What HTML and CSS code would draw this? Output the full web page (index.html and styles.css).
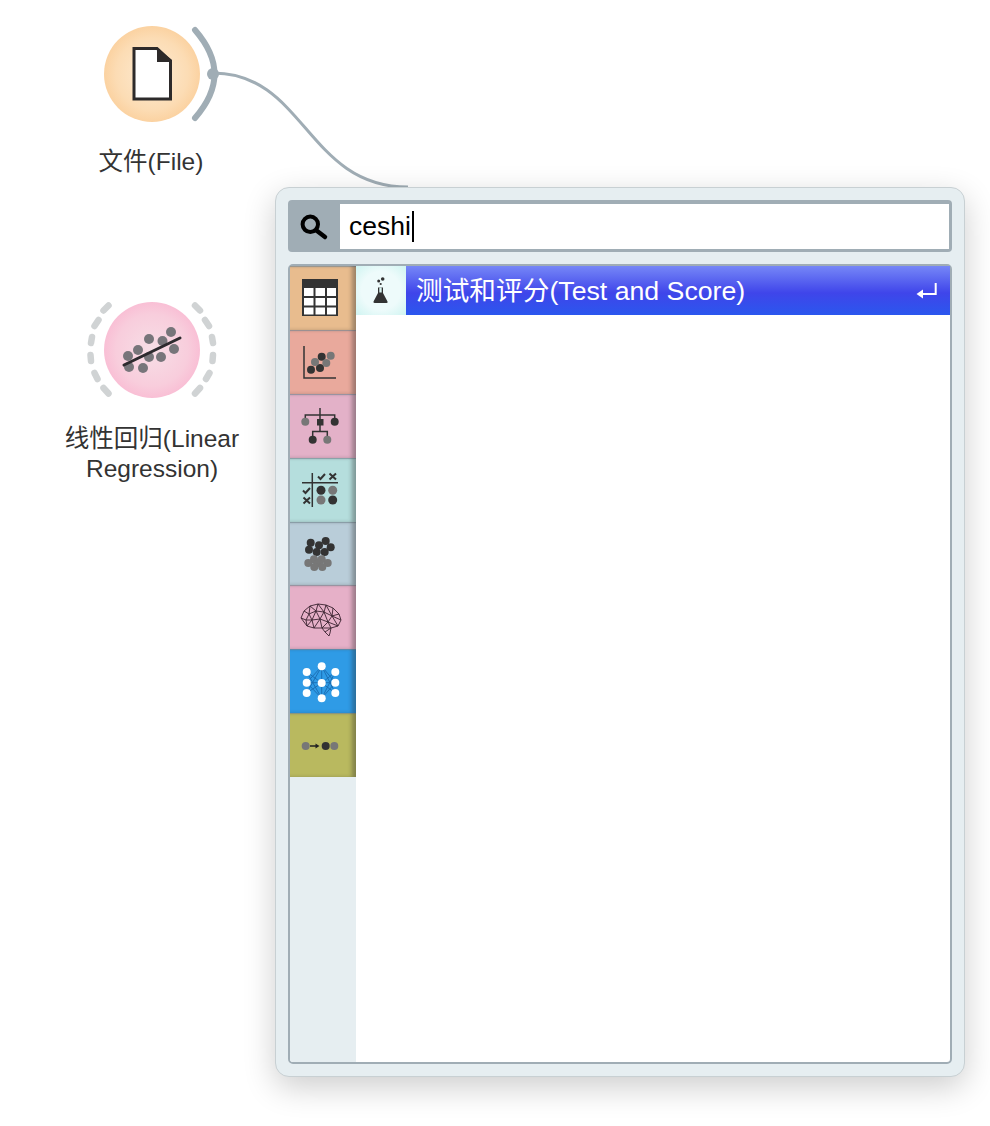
FILE: index.html
```html
<!DOCTYPE html>
<html lang="zh-CN">
<head>
    <meta charset="UTF-8">
    <meta name="viewport" content="width=device-width, initial-scale=1.0">
    <title>文件 - 画布</title>
    <link rel="stylesheet" href="styles.css">
</head>
<body>
    <div class="canvas">
        <!-- nodes and the link drawn on the free canvas -->
        <svg class="scheme" width="990" height="1126" viewBox="0 0 990 1126">
            <defs>
                <radialGradient id="fileGlow">
                    <stop offset="0" stop-color="#fdebd3"/>
                    <stop offset="0.75" stop-color="#fcdcb4"/>
                    <stop offset="1" stop-color="#fbd2a1"/>
                </radialGradient>
                <radialGradient id="regGlow">
                    <stop offset="0" stop-color="#f7dee6"/>
                    <stop offset="0.75" stop-color="#f8cddc"/>
                    <stop offset="1" stop-color="#f9bfd5"/>
                </radialGradient>
            </defs>

            <path class="link" d="M213 73 C305 73 307 187 408 187"/>

            <circle cx="152" cy="74" r="48" fill="url(#fileGlow)"/>
            <path class="doc" d="M134 48.500H157L170.500 61V99H134Z"/>
            <path class="doc-fold" d="M156 47.500 L172 60 L172 62 L157 62 L157 47.500Z"/>
            <path class="out-arc" d="M195 30 C221 60 221 88 195 118"/>
            <circle cx="213" cy="74" r="6" fill="#a0adb5"/>

            <circle cx="152" cy="350" r="48" fill="url(#regGlow)"/>
            <path class="dash-arc" d="M108.500 305.500L103.500 310.500M98.500 320L94.500 326M92 337L91 343M90.500 355L91 361M94.500 373L97.500 379M103.500 388L108.500 393.500"/>
            <path class="dash-arc" d="M195 305.500L200 310.500M205 320L209 326M212 337L213 343M213 355L212.500 361M209.500 373L206 379M200 388L195 393.500"/>
            <g fill="#77757a">
                <circle cx="128" cy="356" r="5"/>
                <circle cx="138" cy="350" r="5"/>
                <circle cx="149" cy="339" r="5"/>
                <circle cx="162.500" cy="341" r="5"/>
                <circle cx="171" cy="332" r="5"/>
                <circle cx="174" cy="349" r="5"/>
                <circle cx="161" cy="357" r="5"/>
                <circle cx="149" cy="357" r="5"/>
                <circle cx="129" cy="367" r="5"/>
                <circle cx="143" cy="368" r="5"/>
            </g>
            <path d="M124 365 L180 338" stroke="#2d2a2e" stroke-width="3" stroke-linecap="round"/>
        </svg>

        <div class="node-label file-label">文件(File)</div>
        <div class="node-label reg-label">线性回归(Linear<br>Regression)</div>

        <!-- quick menu -->
        <div class="menu">
            <div class="search">
                <div class="search-icon">
                    <svg width="52" height="52" viewBox="288 200 52 52">
                        <circle cx="310.300" cy="224.300" r="7.700" fill="none" stroke="#000" stroke-width="4"/>
                        <path d="M316.500 230.500 L325 237" stroke="#000" stroke-width="4.500" stroke-linecap="round"/>
                    </svg>
                </div>
                <div class="search-input">ceshi<span class="caret"></span></div>
            </div>

            <div class="list">
                <div class="tabs">
                    <div class="tab tab-data">
                        <svg width="66" height="64" viewBox="290 266 66 64">
                            <rect x="302" y="279" width="36" height="37" fill="#333"/>
                            <g fill="#fff">
                                <rect x="304" y="288" width="9.500" height="8"/>
                                <rect x="315.500" y="288" width="9.500" height="8"/>
                                <rect x="327" y="288" width="9" height="8"/>
                                <rect x="304" y="298" width="9.500" height="7.500"/>
                                <rect x="315.500" y="298" width="9.500" height="7.500"/>
                                <rect x="327" y="298" width="9" height="7.500"/>
                                <rect x="304" y="307.500" width="9.500" height="7"/>
                                <rect x="315.500" y="307.500" width="9.500" height="7"/>
                                <rect x="327" y="307.500" width="9" height="7"/>
                            </g>
                        </svg>
                    </div>
                    <div class="tab tab-vis">
                        <svg width="66" height="64" viewBox="290 330 66 64">
                            <path d="M304 346V378H336" fill="none" stroke="#333" stroke-width="1.500"/>
                            <g class="dark">
                                <circle cx="321.700" cy="356.700" r="4"/>
                                <circle cx="320" cy="368" r="4"/>
                                <circle cx="311" cy="369.700" r="4"/>
                            </g>
                            <g class="gray">
                                <circle cx="330.700" cy="355.700" r="4"/>
                                <circle cx="315" cy="362" r="4"/>
                                <circle cx="326.300" cy="363" r="4"/>
                            </g>
                        </svg>
                    </div>
                    <div class="tab tab-model">
                        <svg width="66" height="64" viewBox="290 394 66 64">
                            <path d="M320 408V431M305.300 421V415H334.700V421M312.700 438V431.500H327.300V438" fill="none" stroke="#333" stroke-width="1.500"/>
                            <rect x="317" y="419" width="6.500" height="6.500" fill="#333"/>
                            <circle class="gray" cx="305.300" cy="421.700" r="4"/>
                            <circle class="dark" cx="334.700" cy="421.700" r="4"/>
                            <circle class="dark" cx="312.700" cy="439.700" r="4"/>
                            <circle class="gray" cx="327.300" cy="439.700" r="4"/>
                        </svg>
                    </div>
                    <div class="tab tab-eval">
                        <svg width="66" height="64" viewBox="290 458 66 64">
                            <path d="M312.300 473V507M302 482.700H338" stroke="#333" stroke-width="1.500"/>
                            <g fill="none" stroke="#333" stroke-width="2">
                                <path d="M318 476.500L320.500 479L325 474"/>
                                <path d="M329.500 473.500L336 479.500M336 473.500L329.500 479.500"/>
                                <path d="M303 490.500L305.500 493L310 488"/>
                                <path d="M303.500 497.500L310 503.500M310 497.500L303.500 503.500"/>
                            </g>
                            <circle class="dark" cx="321" cy="490.300" r="4.500"/>
                            <circle class="gray" cx="332.700" cy="490.300" r="4.500"/>
                            <circle class="gray" cx="321" cy="500" r="4.500"/>
                            <circle class="dark" cx="332.700" cy="500" r="4.500"/>
                        </svg>
                    </div>
                    <div class="tab tab-cluster">
                        <svg width="66" height="64" viewBox="290 521 66 64">
                            <g class="dark">
                                <circle cx="325.700" cy="540" r="4"/>
                                <circle cx="319" cy="544.300" r="4"/>
                                <circle cx="310.700" cy="541.700" r="4"/>
                                <circle cx="309" cy="548.700" r="4"/>
                                <circle cx="330.700" cy="546.300" r="4"/>
                                <circle cx="316.700" cy="551" r="4"/>
                                <circle cx="324.700" cy="551" r="4"/>
                            </g>
                            <g class="gray">
                                <circle cx="314" cy="558.300" r="4"/>
                                <circle cx="321.700" cy="558.300" r="4"/>
                                <circle cx="308.300" cy="562" r="4"/>
                                <circle cx="327.700" cy="562" r="4"/>
                                <circle cx="317.700" cy="562.300" r="4"/>
                                <circle cx="314.300" cy="566" r="4"/>
                                <circle cx="322.300" cy="566" r="4"/>
                            </g>
                        </svg>
                    </div>
                    <div class="tab tab-brain">
                        <svg width="66" height="64" viewBox="290 585 66 64">
                            <g fill="none" stroke="#3a2230" stroke-width="0.900" stroke-linejoin="round">
                                <path d="M301 618L304 611L310 606L318 604L326 605L333 608L339 614L341 620L338 626L331 628L330 633L329 636L325 632L322 628L314 628L307 626Z"/>
                                <path d="M301 618L306 620L309 614L304 611M309 614L310 606L316 611L318 604L324 612L326 605L332 616L333 608M309 614L316 611L324 612L332 616L339 614M332 616L341 620M306 620L307 626L312 620L306 620M312 620L309 614M312 620L316 611M312 620L314 628M312 620L320 619L316 611M320 619L324 612M320 619L314 628M320 619L322 628L328 622L320 619M328 622L324 612M328 622L332 616M328 622L331 628L322 628M328 622L338 626L332 616M331 628L325 632"/>
                            </g>
                        </svg>
                    </div>
                    <div class="tab tab-neural">
                        <svg width="66" height="64" viewBox="290 649 66 64">
                            <path d="M321.700 666.300L306.700 682.700L321.700 698.300L335.300 682.700ZM306.700 672L321.700 683L335.300 672M306.700 693L321.700 683L335.300 693M306.700 672L321.700 698.300M335.300 672L321.700 698.300M306.700 693L321.700 666.300M335.300 693L321.700 666.300M321.700 666.300V698.300M306.700 682.700H335.300" fill="none" stroke="#1b6fb5" stroke-width="1"/>
                            <g fill="#fff">
                                <circle cx="321.700" cy="666.300" r="4"/>
                                <circle cx="306.700" cy="672" r="4"/>
                                <circle cx="335.300" cy="672" r="4"/>
                                <circle cx="306.700" cy="682.700" r="4"/>
                                <circle cx="321.700" cy="683" r="4"/>
                                <circle cx="335.300" cy="682.700" r="4"/>
                                <circle cx="306.700" cy="693" r="4"/>
                                <circle cx="335.300" cy="693" r="4"/>
                                <circle cx="321.700" cy="698.300" r="4"/>
                            </g>
                        </svg>
                    </div>
                    <div class="tab tab-misc">
                        <svg width="66" height="64" viewBox="290 713 66 64">
                            <circle class="gray" cx="305.700" cy="746" r="4"/>
                            <path d="M310 746H317" stroke="#222" stroke-width="1.500"/>
                            <path d="M315.500 743.500L319.500 746L315.500 748.500Z" fill="#222"/>
                            <circle class="dark" cx="325.700" cy="746" r="4"/>
                            <circle class="gray" cx="334.300" cy="746" r="4"/>
                        </svg>
                    </div>
                </div>

                <div class="results">
                    <div class="result-row">
                        <div class="result-icon">
                            <svg width="50" height="49" viewBox="356 266 50 49">
                                <path d="M378 287.500V293L373.500 301.500Q373 303 375 303H386.500Q388 303 387.500 301.500L383 293V287.500" fill="#333"/>
                                <path d="M379.300 287.500H381.700V292.500H379.300Z" fill="#d8f3f0"/>
                                <circle cx="382.700" cy="279" r="1.800" fill="#333"/>
                                <circle cx="378.700" cy="281" r="1.500" fill="#333"/>
                                <circle cx="380.700" cy="284" r="1.100" fill="#333"/>
                            </svg>
                        </div>
                        <div class="result-text">测试和评分(Test and Score)</div>
                        <svg class="return-icon" width="22" height="18" viewBox="915 277 22 18">
                            <path d="M921 289H935.700V278" fill="none" stroke="#fff" stroke-width="2"/>
                            <path d="M916.500 289L923 284.500V293.500Z" fill="#fff"/>
                        </svg>
                    </div>
                </div>
            </div>
        </div>
    </div>
</body>
</html>
```

FILE: styles.css
```css
body {
    margin: 0;
    background-color: #fff;
    font-family: "Liberation Sans", "Noto Sans CJK SC", sans-serif;
}
.canvas {
    position: relative;
    width: 990px;
    height: 1126px;
    overflow: hidden;
}
.scheme {
    position: absolute;
    left: 0;
    top: 0;
}
.link {
    fill: none;
    stroke: #a0adb5;
    stroke-width: 3;
}
.doc {
    fill: #fff;
    stroke: #2d2a2a;
    stroke-width: 3;
}
.doc-fold {
    fill: #2d2a2a;
}
.out-arc {
    fill: none;
    stroke: #a0adb5;
    stroke-width: 6;
    stroke-linecap: round;
}
.dash-arc {
    fill: none;
    stroke: #d0d3d4;
    stroke-width: 6.500;
    stroke-linecap: round;
}
.node-label {
    position: absolute;
    color: #333;
    font-size: 24.500px;
    line-height: 30px;
    text-align: center;
    white-space: nowrap;
}
.file-label {
    left: 71px;
    top: 147px;
    width: 160px;
}
.reg-label {
    left: 52px;
    top: 424px;
    width: 200px;
}

.menu {
    position: absolute;
    left: 275px;
    top: 187px;
    box-sizing: border-box;
    width: 690px;
    height: 890px;
    padding: 12px;
    display: flex;
    flex-direction: column;
    gap: 12px;
    background-color: #e6eef1;
    border: 1px solid #c8d0d3;
    border-radius: 14px;
    box-shadow: 0 10px 32px rgba(0,0,0,0.2);
}
.search {
    display: flex;
    flex: none;
    height: 52px;
    box-sizing: border-box;
    padding: 4px 3px 3px 0;
    background-color: #a0adb5;
    border-radius: 4px;
}
.search-icon {
    flex: none;
    width: 52px;
    margin: -4px 0 -3px;
}
.search-icon svg {
    display: block;
}
.search-input {
    flex: 1;
    display: flex;
    align-items: center;
    padding-left: 9px;
    background-color: #fff;
    color: #000;
    font-size: 26.500px;
}
.caret {
    width: 2px;
    height: 31px;
    margin-left: 1px;
    background-color: #000;
}
.list {
    flex: 1;
    display: flex;
    min-height: 0;
    background-color: #fff;
    border: 2px solid #a0adb5;
    border-radius: 5px;
}
.tabs {
    flex: none;
    width: 66px;
    background-color: #e6eef1;
    border-bottom-left-radius: 3px;
}
.tab {
    height: 63.875px;
    box-shadow: inset -5px 0 4px -1px rgba(40,40,40,0.38), inset 0 2px 1px -1px rgba(130,150,160,0.7);
}
.tab svg {
    display: block;
}
.tab-data { background-color: #e8bc8e; }
.tab-vis { background-color: #e9a99c; }
.tab-model { background-color: #e3b1c8; }
.tab-eval { background-color: #b5dedd; }
.tab-cluster { background-color: #b9cdd9; }
.tab-brain { background-color: #e6b0c8; }
.tab-neural { background-color: #2f9be6; }
.tab-misc { background-color: #b9b95f; }
.dark { fill: #333; }
.gray { fill: #777; }
.results {
    flex: 1;
    min-width: 0;
}
.result-row {
    display: flex;
    align-items: center;
    height: 49px;
    background: linear-gradient(#7687f7 0%, #3f45ea 55%, #2b57ee 100%);
}
.result-icon {
    flex: none;
    width: 50px;
    height: 49px;
    background: radial-gradient(#eefbfb 55%, #cff4f1 100%);
}
.result-icon svg {
    display: block;
}
.result-text {
    flex: 1;
    padding: 0 0 4px 10px;
    color: #fff;
    font-size: 26.700px;
}
.return-icon {
    flex: none;
    margin-right: 13px;
}
```
